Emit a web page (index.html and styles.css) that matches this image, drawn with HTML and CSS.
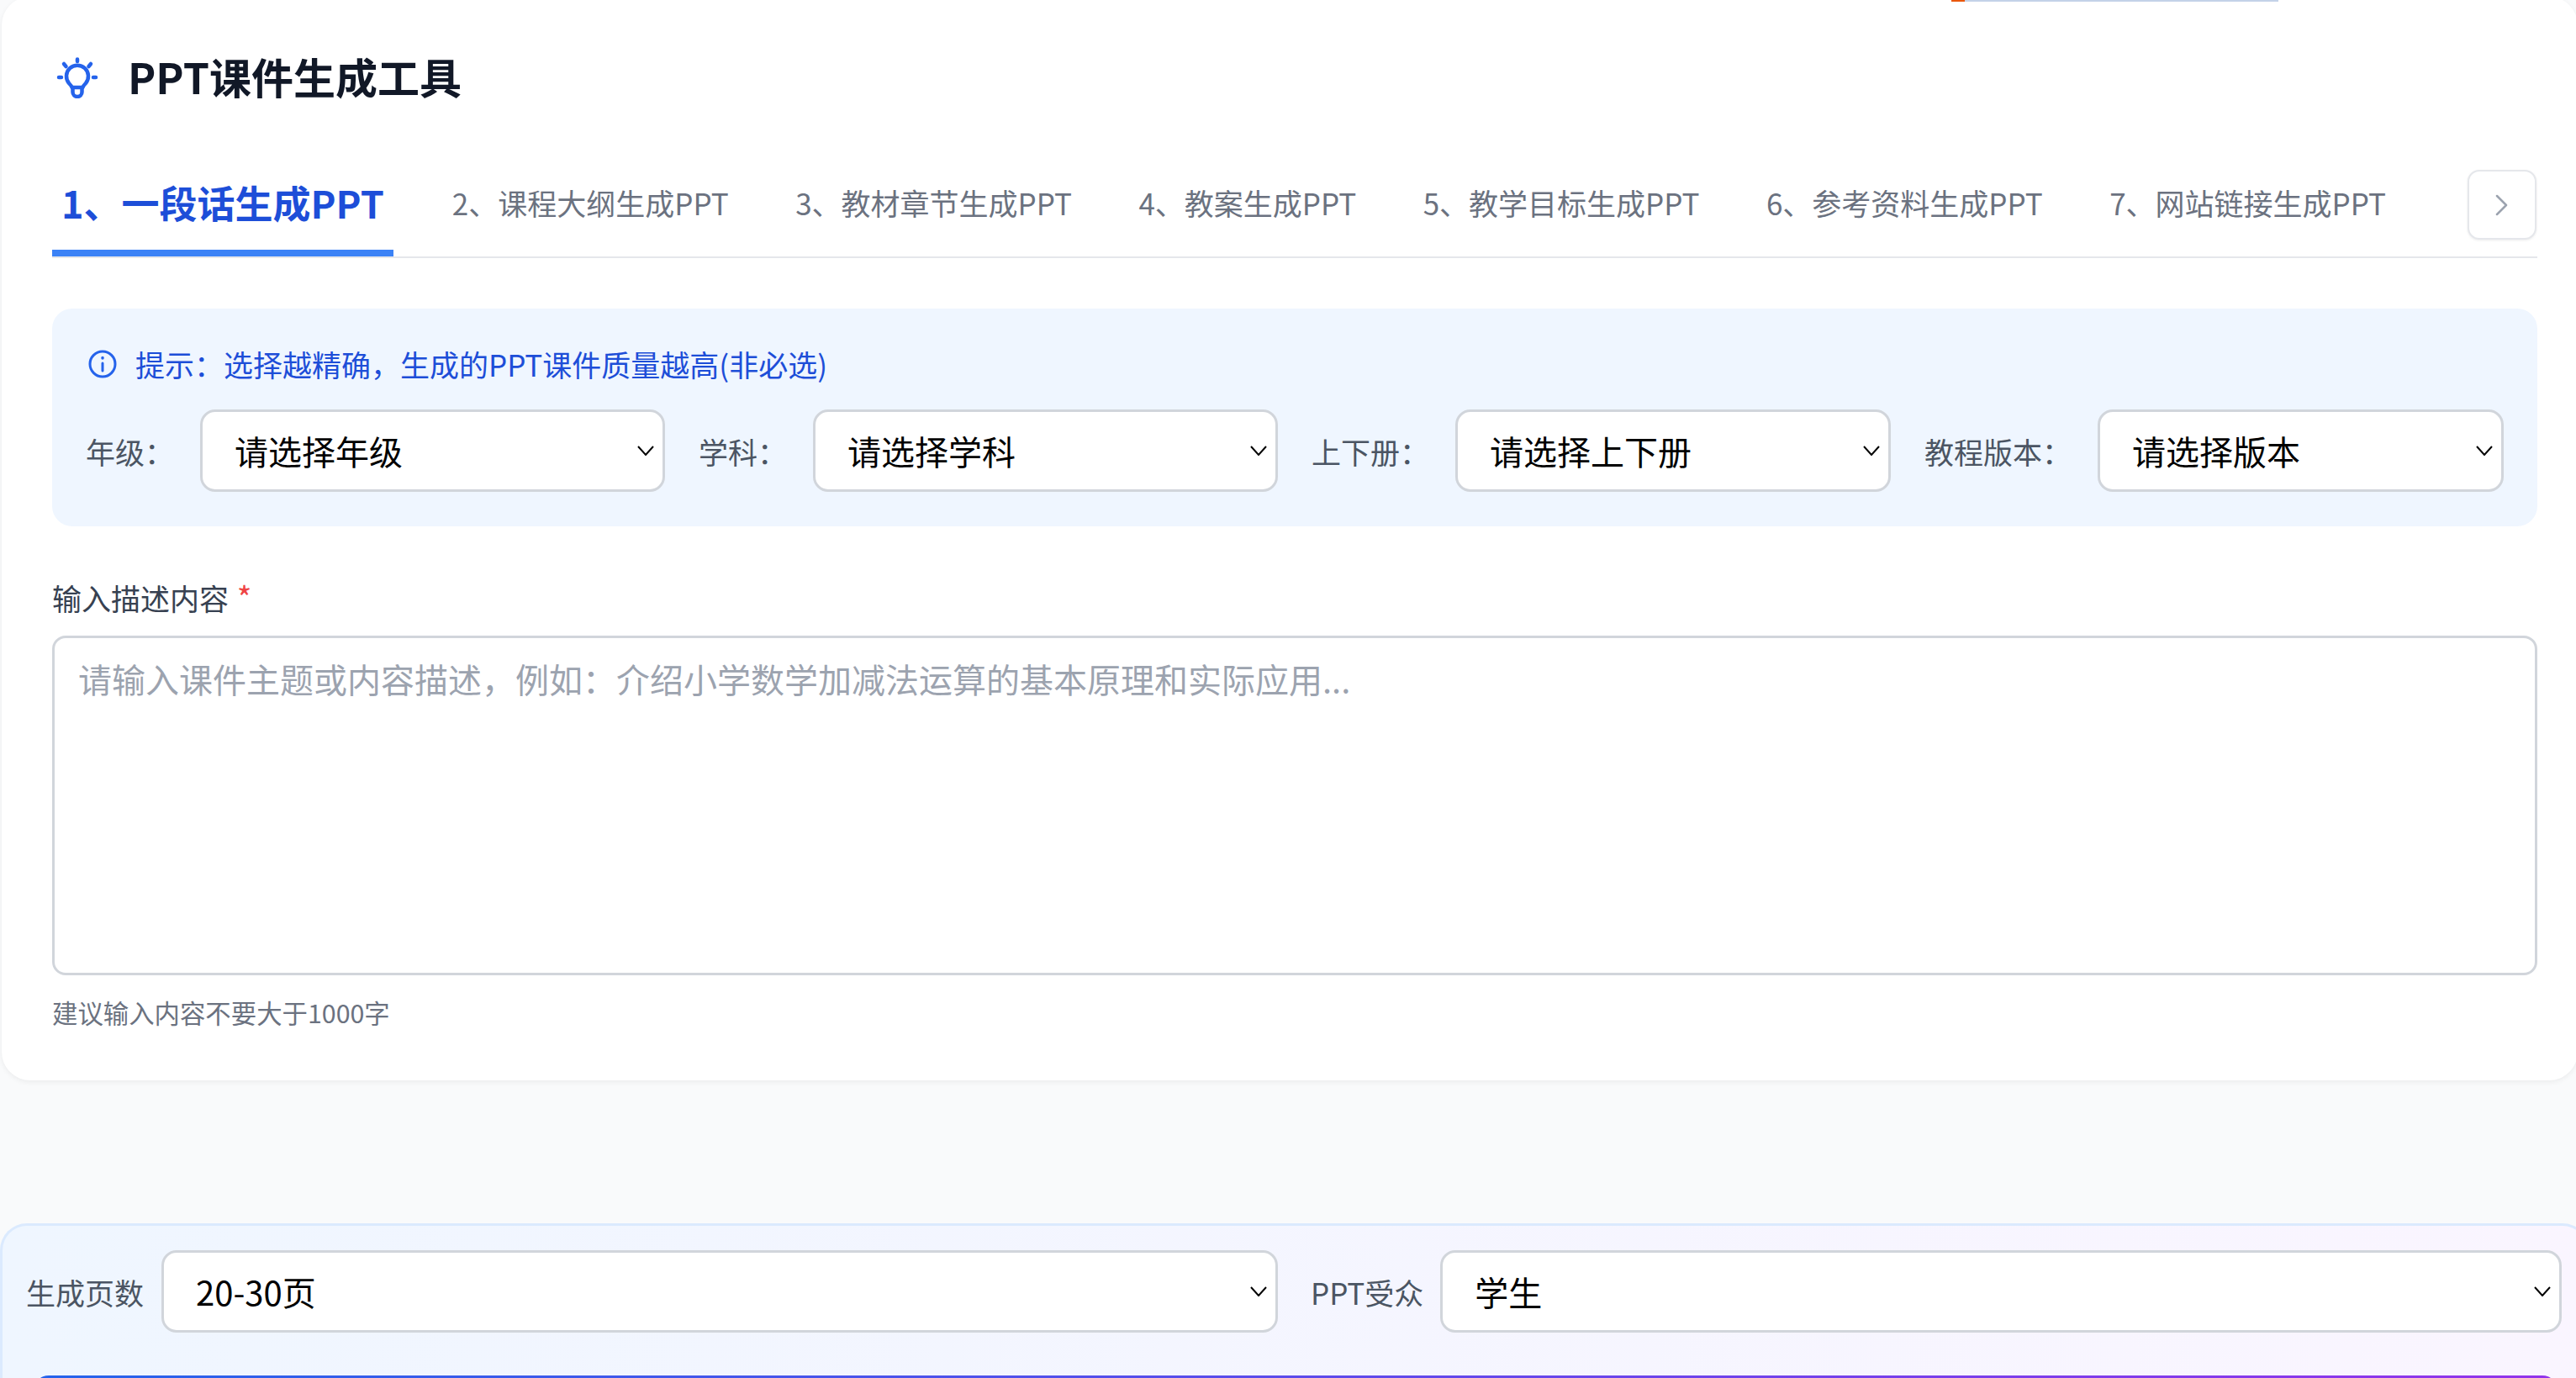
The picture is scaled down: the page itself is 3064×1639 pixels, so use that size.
FILE: index.html
```html
<!DOCTYPE html>
<html lang="zh-CN">
<head>
<meta charset="utf-8">
<title>PPT课件生成工具</title>
<link rel="stylesheet" href="styles.css">
</head>
<body>
<div class="top-strip"><span class="strip-accent"></span></div>
<main class="card">
  <header class="title-row">
    <svg class="bulb" viewBox="0 0 50 50" fill="none" stroke="#2563eb" stroke-width="4.500" stroke-linecap="round" stroke-linejoin="round" aria-hidden="true">
      <path d="M25 3.500v2.500M9 9l2.500 3M41 9l-2.500 3M3 25h3M44 25h3"/>
      <path d="M18.500 37c-.5-2-2-3.500-3.500-5a13 13 0 1 1 20 0c-1.500 1.500-3 3-3.500 5z"/>
      <path d="M19.500 37v5.500a5.500 5.500 0 0 0 11 0V37"/>
    </svg>
    <h1 class="title">PPT课件生成工具</h1>
  </header>

  <nav class="tabs">
    <a class="tab tab-active">1、一段话生成PPT</a>
    <a class="tab">2、课程大纲生成PPT</a>
    <a class="tab">3、教材章节生成PPT</a>
    <a class="tab">4、教案生成PPT</a>
    <a class="tab">5、教学目标生成PPT</a>
    <a class="tab">6、参考资料生成PPT</a>
    <a class="tab">7、网站链接生成PPT</a>
    <button class="tab-next" aria-label="下一页">
      <svg viewBox="0 0 16 26" fill="none" stroke="#9ca3af" stroke-width="2.500" stroke-linecap="round" stroke-linejoin="round"><path d="M2 2l11 11L2 24"/></svg>
    </button>
  </nav>

  <section class="filter-panel">
    <p class="tip">
      <svg class="tip-icon" viewBox="0 0 34 34" fill="none" stroke="#2563eb" stroke-width="3" stroke-linecap="round" aria-hidden="true">
        <circle cx="17" cy="17" r="15"/><path d="M17 16v9"/><path d="M17 9.500v.5" stroke-width="3.500"/>
      </svg>
      <span>提示：选择越精确，生成的PPT课件质量越高(非必选)</span>
    </p>
    <div class="filter-grid">
      <label class="field"><span class="field-label">年级：</span><select class="select"><option>请选择年级</option></select></label>
      <label class="field"><span class="field-label">学科：</span><select class="select"><option>请选择学科</option></select></label>
      <label class="field"><span class="field-label">上下册：</span><select class="select"><option>请选择上下册</option></select></label>
      <label class="field"><span class="field-label">教程版本：</span><select class="select"><option>请选择版本</option></select></label>
    </div>
  </section>

  <label class="desc-label" for="desc">输入描述内容 <span class="req">*</span></label>
  <textarea id="desc" class="desc" placeholder="请输入课件主题或内容描述，例如：介绍小学数学加减法运算的基本原理和实际应用..."></textarea>
  <p class="hint">建议输入内容不要大于1000字</p>
</main>

<section class="bottom-panel">
  <div class="bottom-row">
    <label class="bottom-field bf-pages"><span class="field-label">生成页数</span><select class="select"><option>20-30页</option></select></label>
    <label class="bottom-field bf-aud"><span class="field-label">PPT受众</span><select class="select"><option>学生</option></select></label>
  </div>
  <button class="generate" aria-label="生成PPT"></button>
</section>
</body>
</html>
```
FILE: styles.css
```css
* { box-sizing: border-box; }
html, body { margin: 0; height: 1639px; overflow: hidden; }
body {
  position: relative;
  background: #f9fafb;
  font-family: "Noto Sans CJK SC", "Noto Sans", sans-serif;
  color: #111827;
}
.top-strip {
  position: absolute; z-index: 2; left: 2321px; top: 0;
  width: 389px; height: 2px; background: #c3d2e8;
}
.strip-accent { display: block; width: 16px; height: 2px; background: #ea580c; }

.card {
  margin: -4px 0 0 2px;
  width: 3064px;
  height: 1289px;
  padding: 62px 48px 0 60px;
  background: #fff;
  border-radius: 34px;
  box-shadow: 0 2px 6px rgba(0, 0, 0, .06);
}
.title-row { display: flex; align-items: center; gap: 35px; height: 64px; padding-left: 5px; }
.bulb { width: 50px; height: 50px; flex: none; margin-top: 4px; }
.title { margin: 0; font-size: 50px; font-weight: 700; line-height: 64px; color: #111827; }

.tabs {
  display: flex; align-items: flex-start;
  margin-top: 76px;
  height: 109px;
  border-bottom: 2px solid #e5e7eb;
  position: relative;
}
.tab {
  display: block;
  height: 107px;
  line-height: 86px;
  font-size: 35px;
  color: #6b7280;
  padding: 0 12px;
  margin-right: 55.500px;
  white-space: nowrap;
}
.tab-active {
  font-size: 45px;
  font-weight: 700;
  color: #1d4ed8;
  border-bottom: 8px solid #3b82f6;
  padding: 0 11px;
  margin-right: 58px;
}
.tab-next {
  position: absolute; right: 1px; top: 4px;
  width: 82px; height: 83px;
  background: #fff;
  border: 2px solid #e5e7eb;
  border-radius: 14px;
  box-shadow: 0 1px 3px rgba(0, 0, 0, .08);
  padding: 0;
  display: flex; align-items: center; justify-content: center;
}
.tab-next svg { width: 16px; height: 26px; }

.filter-panel {
  margin-top: 60px;
  height: 259px;
  background: #eff6ff;
  border-radius: 24px;
  padding: 46px 40px 0 40px;
}
.tip {
  display: flex; align-items: center; gap: 22px;
  margin: 0; height: 40px; padding-left: 3px;
  font-size: 35px; color: #1d4ed8; line-height: 40px;
}
.tip-icon { width: 34px; height: 34px; flex: none; }
.filter-grid {
  display: grid; grid-template-columns: repeat(4, 1fr); gap: 40px;
  margin-top: 34px;
}
.field { display: flex; align-items: center; gap: 31px; }
.field-label { font-size: 35px; color: #4b5563; white-space: nowrap; }
.select {
  appearance: none;
  flex: 1; min-width: 0;
  height: 98px;
  padding: 0 48px 0 38px;
  font-family: inherit;
  font-size: 40px;
  color: #000;
  border: 3px solid #d1d5db;
  border-radius: 18px;
  background: #fff url("data:image/svg+xml,%3Csvg xmlns='http://www.w3.org/2000/svg' viewBox='0 0 20 12'%3E%3Cpath d='M1 1l9 10 9-10' fill='none' stroke='%23000' stroke-width='2'/%3E%3C/svg%3E") no-repeat right 10px center / 20px 12px;
}

.desc-label { display: block; margin-top: 62px; font-size: 35px; line-height: 46px; color: #374151; }
.req { color: #ef4444; font-size: 38px; line-height: 30px; margin-left: 2px; }
.desc {
  display: block;
  width: 100%;
  height: 404px;
  margin-top: 22px;
  padding: 22px 28px;
  font-family: inherit;
  font-size: 40px;
  line-height: 52px;
  border: 3px solid #d1d5db;
  border-radius: 16px;
  background: #fff;
  resize: none;
}
.desc::placeholder { color: #9ca3af; opacity: 1; }
.hint { margin: 23px 0 0; font-size: 30.400px; line-height: 42px; color: #6b7280; }

.bottom-panel {
  margin-top: 170px;
  width: 3080px;
  height: 184px;
  overflow: hidden;
  padding: 29px 0 0 28px;
  background: linear-gradient(90deg, #eff6ff, #faf5ff);
  border: 3px solid #dbeafe;
  border-bottom: 0;
  border-radius: 32px 32px 0 0;
}
.bottom-row { display: flex; gap: 39px; width: 3016px; }
.bottom-field { display: flex; align-items: center; gap: 21px; }
.bf-pages { width: 1489px; }
.bf-aud { flex: 1; gap: 20px; }
.generate {
  display: block;
  margin: 51px 0 0 9px;
  width: 3002px;
  height: 96px;
  border: 0;
  border-radius: 18px;
  background: linear-gradient(90deg, #2563eb, #9333ea);
}
```
